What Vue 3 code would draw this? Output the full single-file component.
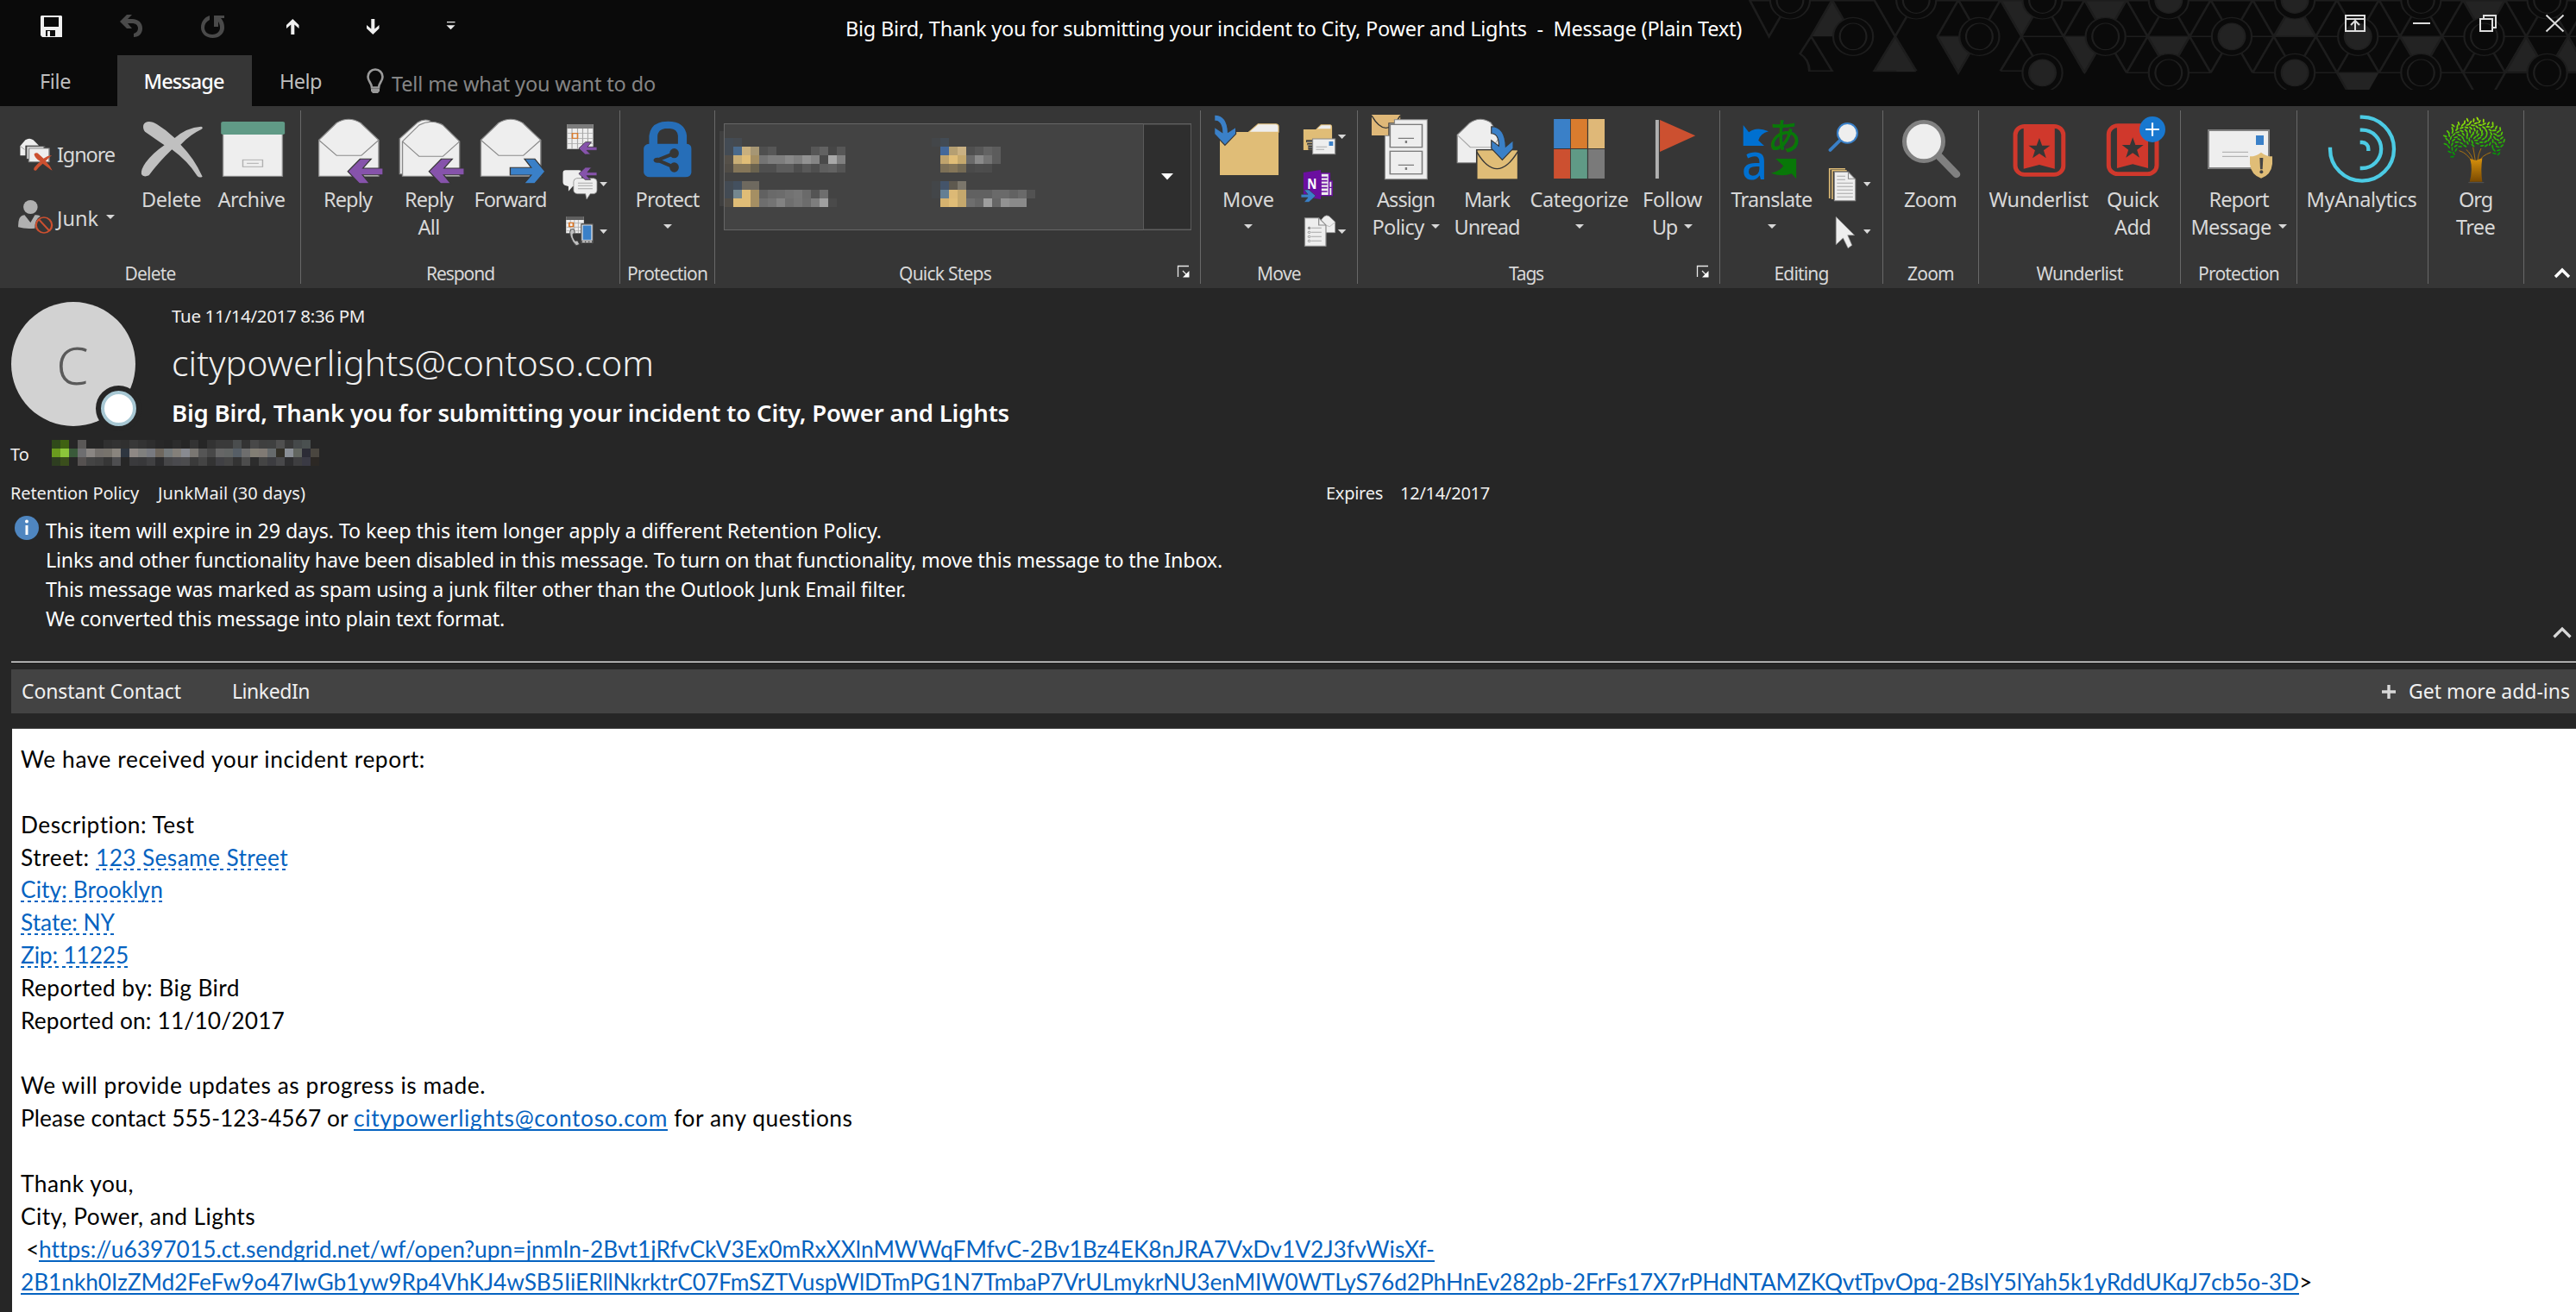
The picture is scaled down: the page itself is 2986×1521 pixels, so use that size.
<script setup>
// Tightens or loosens tracking so a label fills its designed width.
const vFit = {
  mounted(el, { value }) {
    const n = el.textContent.length
    if (n < 2 || !value) return
    const w = el.getBoundingClientRect().width
    el.style.letterSpacing = ((value - w) / n).toFixed(3) + 'px'
  }
}

// Artwork spaces: each ribbon area has its own drawing scale.
const space = (x, sx) => (s) => `<g transform="translate(${x} 120) scale(${sx} .33333)">${s}</g>`
const a3 = space(0, 0.45918)
const a4 = space(640, 0.48469)
const a5 = space(1380, 0.39541)
const a6 = space(1960, 0.35714)
const a7 = space(2480, 0.33333)

const W = '#eeeeee'
const G = '#8a8a8a'
const BG = '#363636'
const env = `<path d="M805 127L850 67Q880 42 910 67L956 127V253H805Z" fill="${W}" stroke="${G}" stroke-width="3"/><path d="M805 127L850 181H912L956 127" fill="none" stroke="${G}" stroke-width="3"/>`
const back = `<path d="M967 225H916L937 193H909L878 236L907 278H933L915 248H967Z" fill="#8653ab" stroke="${BG}" stroke-width="3"/>`
const smallBack = (x, y) => `<path transform="translate(${x} ${y})" d="M46 17H22L32 0H17L0 22L16 43H30L20 29H46Z" fill="#8653ab" stroke="${BG}" stroke-width="2"/>`
const tri = (x, y, w = 24, h = 15) => `<path d="M${x} ${y}h${w}l${-w / 2} ${h}z" fill="#d8d8d8"/>`
const star = 'M0 -36L9 -10H35L14 7L22 34L0 18L-22 34L-14 7L-35 -10H-9Z'

const icons = {
  delete: a3('<path d="M362 75C366 60 382 60 396 72Q420 92 441 120Q470 84 508 80Q515 84 508 90Q480 108 456 143Q490 190 511 254Q504 260 498 252Q474 200 434 160Q400 205 376 250Q362 258 357 246Q355 230 368 205Q386 172 415 145Q384 115 366 98Q360 88 362 75Z" fill="#c0c0c0"/>'),
  archive: a3(`<rect x="563" y="105" width="150" height="148" fill="${W}" stroke="${G}" stroke-width="3"/><rect x="558" y="63" width="161" height="45" rx="5" fill="#609a86"/><rect x="613" y="196" width="50" height="24" fill="none" stroke="#b0b0b0" stroke-width="3"/><path d="M623 208H653" stroke="#b0b0b0" stroke-width="3"/>`),
  reply: a3(env + back),
  replyAll: a3(`<path d="M1009 245V122L1054 66Q1070 52 1085 60V245Z" fill="${W}" stroke="${G}" stroke-width="3"/><path d="M1016 132L1058 75Q1088 52 1118 75L1160 132V253H1016Z" fill="${W}" stroke="${G}" stroke-width="3"/><path d="M1016 132L1058 184H1118L1160 132" fill="none" stroke="${G}" stroke-width="3"/><g transform="translate(205 0)">${back}</g>`),
  forward: a3(`<g transform="translate(409 0)">${env}</g><path d="M1288 223H1341L1324 193H1350L1376 236L1350 278H1323L1341 249H1288Z" fill="#3a80c8" stroke="${BG}" stroke-width="3"/>`),
  ignore: a3(`<path d="M51 148L64 127Q74 117 84 127L97 145V181H51Z" fill="${W}"/><path d="M51 148L62 160" stroke="${G}" stroke-width="2"/><rect x="66" y="148" width="46" height="46" fill="${W}" stroke="${BG}" stroke-width="4"/><rect x="73" y="156" width="51" height="47" fill="${W}" stroke="${G}" stroke-width="3"/><path d="M68 193V150H114" fill="none" stroke="${G}" stroke-width="2"/><path d="M86 176Q92 168 98 176L110 191Q120 181 131 180Q122 190 115 200Q127 215 132 233Q124 226 108 209Q98 220 91 233Q82 234 87 222Q94 210 102 202Q88 190 86 176Z" fill="#cc5030"/>`),
  junk: a3('<ellipse cx="77" cy="360" rx="18" ry="24" fill="#b0b0b0"/><path d="M46 430Q45 388 62 388L77 414L88 388Q98 386 102 392Q88 402 88 434Q66 438 46 430Z" fill="#b0b0b0"/><ellipse cx="111" cy="423" rx="20" ry="27" fill="#363636" stroke="#cc5030" stroke-width="5"/><path d="M98 403L125 443" stroke="#cc5030" stroke-width="5"/>'),
  respondSmall: a3(
    `<rect x="1431" y="72" width="67" height="87" fill="${W}"/><rect x="1431" y="72" width="67" height="15" fill="#7c7c7c"/><path d="M1432 103H1497M1432 121H1497M1432 139H1497M1444 87V158M1458 87V158M1471 87V158M1484 87V158M1432 87V158H1497V87" fill="none" stroke="#a8a8a8" stroke-width="2.5"/><rect x="1445" y="104" width="13" height="17" fill="${W}" stroke="#d87a2c" stroke-width="3.5"/>${smallBack(1461, 134)}` +
    `<path d="M1428 232H1461Q1468 232 1468 242V278Q1468 288 1461 288H1446L1435 305V288Q1421 286 1421 274V242Q1421 232 1428 232Z" fill="${W}"/><path d="M1456 260H1499Q1507 262 1507 272V302Q1507 312 1499 314H1490L1481 333L1478 314H1458Q1448 312 1448 302V272Q1448 262 1456 260Z" fill="${W}" stroke="${G}" stroke-width="2"/><path d="M1459 277H1496M1459 286H1496M1459 296H1496" stroke="#a8a8a8" stroke-width="3"/>${smallBack(1461, 222)}${tri(1514, 273, 19)}` +
    `<rect x="1429" y="393" width="45" height="58" fill="${W}"/><rect x="1429" y="393" width="45" height="12" fill="#5f5f5f"/><path d="M1430 416H1474M1430 430H1474M1440 405V450M1450 405V450M1460 405V450M1430 443H1474" stroke="#a8a8a8" stroke-width="2"/><rect x="1437" y="415" width="10" height="13" fill="${W}" stroke="#d8701c" stroke-width="3.5"/><path d="M1441 438Q1437 446 1440 462Q1445 484 1455 494L1463 490L1458 477L1452 478Q1445 465 1446 455L1451 448L1448 436Z" fill="#c0c0c0" stroke="${BG}" stroke-width="2"/><rect x="1466" y="417" width="32" height="70" rx="3" fill="#565656"/><rect x="1470" y="423" width="24" height="52" fill="#3a80c8" stroke="${W}" stroke-width="2.5"/><path d="M1470 481H1494" stroke="${W}" stroke-width="4" stroke-dasharray="7 2"/>${tri(1514, 438, 19)}`),
  protect: a4(`<path d="M232 140V112Q236 62 277 62Q318 62 322 112V140H322Q333 142 333 156V240Q332 256 318 256H234Q221 255 219 240V156Q220 142 232 140ZM252 140H301V112Q299 88 282 87H270Q254 90 252 112Z" fill="#266eb8" fill-rule="evenodd"/><path d="M294 172L252 197L294 223" fill="none" stroke="${BG}" stroke-width="11"/><ellipse cx="292" cy="173" rx="11" ry="17" fill="${BG}"/><ellipse cx="292" cy="222" rx="11" ry="17" fill="${BG}"/><ellipse cx="252" cy="197" rx="9" ry="9" fill="${BG}"/>`),
  move: a5(`<path d="M170 100L198 71H250Q258 71 258 80V100Z" fill="${W}" stroke="#e0bd77" stroke-width="3"/><path d="M86 99H258V249H86Z" fill="#e0bd77"/><path d="M70 39Q108 40 110 100L133 82V106L101 145L70 106V82L93 100Q92 60 70 60Z" fill="#3a80c8" stroke="${BG}" stroke-width="3"/>`),
  moveSmall: a5(
    `<path d="M331 90H367L382 73H409Q415 73 415 82V162H331Z" fill="#e0bd77"/><path d="M372 88L384 76H411V88Z" fill="${W}"/><path d="M339 131H362M342 141H362M345 150H362M345 157H362" stroke="${BG}" stroke-width="8"/><path d="M341 133H360M343 143H360M346 153H360" stroke="${G}" stroke-width="3"/><rect x="358" y="123" width="66" height="53" fill="${W}" stroke="${G}" stroke-width="3"/><rect x="406" y="132" width="12" height="15" fill="#3a80c8"/><path d="M368 151H400M368 160H392" stroke="#b0b0b0" stroke-width="3"/>${tri(432, 108)}` +
    `<path d="M331 240L382 231V333L331 325Z" fill="#6b0fa0"/><path d="M382 243H408V270H415V320H382Z" fill="${W}" stroke="#6b0fa0" stroke-width="4"/><path d="M382 257H401M382 269H401M382 281H401M382 293H401M382 306H401" stroke="#6b0fa0" stroke-width="5"/><path d="M406 245V320M406 292H415" stroke="#6b0fa0" stroke-width="4"/><text x="342" y="298" font-family="Noto Sans" font-weight="700" font-size="48" textLength="28" lengthAdjust="spacingAndGlyphs" fill="#fff">N</text><path d="M324 316H344L333 300H347L367 321L347 343H333L344 327H324Z" fill="#3a80c8" stroke="${BG}" stroke-width="1.5"/>` +
    `<path d="M381 416L383 405Q398 378 412 398L424 412V449H381Z" fill="${W}" stroke="${G}" stroke-width="2"/><path d="M398 424L408 428L424 413" fill="none" stroke="#a8a8a8" stroke-width="2"/><path d="M335 398H376L397 423V496H335Z" fill="${W}" stroke="${G}" stroke-width="3"/><path d="M376 398V423H397" fill="none" stroke="${G}" stroke-width="3"/><path d="M354 433H384M354 448H384M354 463H384M354 478H384" stroke="#a8a8a8" stroke-width="3"/><g fill="none" stroke="${G}" stroke-width="2.5"><circle cx="348" cy="433" r="3.5" fill="${G}"/><circle cx="348" cy="448" r="3.5"/><circle cx="348" cy="463" r="3.5"/><circle cx="348" cy="478" r="3.5"/></g>${tri(432, 438)}`),
  assign: a5(`<rect x="531" y="39" width="84" height="72" fill="#dfb878"/><path d="M531 42Q573 128 615 42" fill="none" stroke="${BG}" stroke-width="4"/><path d="M580 67H695V263H570V111H580Z" fill="${BG}"/><path d="M598 56H694V263H570V112H584V70H598Z" fill="${W}" stroke="${G}" stroke-width="3"/><rect x="585" y="73" width="94" height="79" fill="${W}" stroke="#7c7c7c" stroke-width="4"/><rect x="585" y="166" width="94" height="79" fill="${W}" stroke="#7c7c7c" stroke-width="4"/><path d="M609 121H655M609 214H655" stroke="#7c7c7c" stroke-width="4"/><path d="M632 129V138M632 222V231" stroke="#7c7c7c" stroke-width="6"/>`),
  unread: a5(`<path d="M782 109L818 68Q848 42 880 66L904 109V206H782Z" fill="${W}" stroke="${G}" stroke-width="3"/><path d="M782 109L820 152H886L904 120" fill="none" stroke="#a8a8a8" stroke-width="3"/><rect x="839" y="161" width="121" height="103" fill="#e0bd77" stroke="${BG}" stroke-width="4"/><path d="M839 168Q898 286 959 168" fill="none" stroke="${BG}" stroke-width="4"/><path d="M882 80Q922 80 924 150L946 128V156L914 196L882 156V128L904 148Q904 104 882 104Z" fill="#3a80c8" stroke="${BG}" stroke-width="3"/>`),
  categorize: a5('<rect x="1065" y="54" width="48" height="102" fill="#3a80c8"/><rect x="1115" y="54" width="48" height="102" fill="#d97c2e"/><rect x="1166" y="54" width="48" height="102" fill="#dfb878"/><rect x="1065" y="159" width="48" height="102" fill="#cc5030"/><rect x="1115" y="159" width="48" height="102" fill="#609a86"/><rect x="1166" y="159" width="48" height="102" fill="#7a7a7a"/>'),
  follow: a5('<rect x="1363" y="57" width="10" height="204" fill="#b0b0b0"/><path d="M1376 57L1480 112L1376 168Z" fill="#cc5030"/>'),
  translate: a6('<path d="M170 75L188 100Q214 78 252 97Q226 104 219 128L238 147H170Z" fill="#0070d0"/><path d="M342 262L327 244Q296 256 260 242Q290 236 300 217L275 192H342Z" fill="#087808"/><text x="165" y="263" font-family="Noto Sans" font-weight="500" font-size="172" textLength="84" lengthAdjust="spacingAndGlyphs" fill="#0070d0">a</text><text x="250" y="162" font-family="Noto Sans CJK JP" font-weight="500" font-size="128" textLength="108" lengthAdjust="spacingAndGlyphs" fill="#087808">あ</text>'),
  editSmall: a6(
    `<path d="M452 162L484 128" stroke="#3a80c8" stroke-width="11" stroke-linecap="round"/><ellipse cx="508" cy="103" rx="32" ry="34" fill="${W}" stroke="#3a80c8" stroke-width="6"/>` +
    `<path d="M450 330V227H501M459 333V233H506" fill="none" stroke="#e0bd77" stroke-width="4.5"/><path d="M466 238H511L534 264V338H466Z" fill="${W}" stroke="${G}" stroke-width="3"/><path d="M511 238V262H534" fill="none" stroke="${G}" stroke-width="3"/><path d="M474 253H501M474 265H501M474 277H526M474 289H526M474 301H526M474 313H526M474 325H526" stroke="#a8a8a8" stroke-width="3"/>${tri(560, 273)}` +
    `<path d="M471 394L531 458H509L523 493L510 503L494 468L471 491Z" fill="${W}" stroke="${G}" stroke-width="2"/>${tri(560, 438)}`),
  zoom: a6(`<path d="M806 184L862 246" stroke="#808080" stroke-width="25" stroke-linecap="round"/><ellipse cx="756" cy="132" rx="63" ry="68" fill="${W}" stroke="#808080" stroke-width="14"/>`),
  wunder: a6(`<rect x="1053" y="79" width="156" height="168" rx="30" fill="none" stroke="#d0382c" stroke-width="14"/><path d="M1080 78H1181V227L1131 213L1080 227Z" fill="#d0382c"/><path transform="translate(1131 156)" d="${star}" fill="${BG}"/>`),
  quick: a6(`<g transform="translate(303 -2)"><rect x="1053" y="79" width="156" height="168" rx="30" fill="none" stroke="#d0382c" stroke-width="14"/><path d="M1080 78H1181V227L1131 213L1080 227Z" fill="#d0382c"/><path transform="translate(1131 156)" d="${star}" fill="${BG}"/></g><ellipse cx="1498" cy="90" rx="42" ry="45" fill="#1878d0"/><path d="M1476 90H1520M1498 67V113" stroke="#fff" stroke-width="6"/>`),
  report: a7(`<rect x="240" y="93" width="210" height="132" fill="${W}" stroke="#808080" stroke-width="6"/><rect x="405" y="111" width="27" height="33" fill="#3a80c8"/><path d="M288 169H378M288 184H378" stroke="#a8a8a8" stroke-width="3"/><path d="M384 184Q406 184 423 170Q440 184 462 184V210Q458 248 423 260Q388 248 384 210Z" fill="#e0bd77"/><path d="M418 189H430L428 229H420Z" fill="#444"/><circle cx="424" cy="238" r="6" fill="#444"/>`),
  analytics: a7('<g fill="none" stroke="#4ccbe4" stroke-width="13"><path d="M767 47H774A111 111 0 1 1 663 158V152"/><path d="M767 92H774A66 66 0 0 1 774 225H767"/><path d="M767 135H774A22 22 0 0 1 796 158V165"/></g>'),
  tree: a7(treeArt())
}

function treeArt() {
  let s = '<defs><linearGradient id="trunk" x1="0" y1="0" x2="0" y2="1"><stop offset="0" stop-color="#d8920c"/><stop offset="1" stop-color="#7a4a02"/></linearGradient></defs>'
  s += '<g fill="none" stroke="#a87010" stroke-width="3"><path d="M1158 205Q1140 172 1112 164M1160 200Q1155 176 1136 160M1168 200Q1164 172 1160 152M1176 198Q1178 176 1188 156M1180 202Q1192 180 1222 170"/></g>'
  s += '<path d="M1150 192L1170 198L1192 190Q1186 232 1192 272H1148Q1160 232 1150 192Z" fill="url(#trunk)"/><path d="M1144 275H1198" stroke="#555" stroke-width="3"/>'
  for (let i = 0; i < 150; i++) {
    const r = Math.sqrt((i + 0.5) / 150)
    const t = i * 2.39996
    const x = 1165 + r * 105 * Math.cos(t)
    const y = 128 + r * (Math.sin(t) > 0 ? 88 : 76) * Math.sin(t)
    const dx = Math.abs(x - 1167)
    if (y > 150 && dx < 48 + (y - 150) * 0.6) continue
    const k = Math.max(0, Math.min(1, (y - 50) / 140))
    const c = `rgb(${Math.round(165 * (1 - k) ** 1.4)},${Math.round(232 - 92 * k)},8)`
    s += `<ellipse cx="${x.toFixed(1)}" cy="${y.toFixed(1)}" rx="7.6" ry="2.9" transform="rotate(${(i * 67) % 180} ${x.toFixed(1)} ${y.toFixed(1)})" fill="${c}"/>`
  }
  return s
}

const L = (t, w, arrow) => ({ t, w, arrow })
const A = { arrowOnly: true }
const groups = [
  { x: 0, e: 349, label: 'Delete', lw: 59, items: [
    { pair: true, x: 18, w: 132, rows: [{ icon: 'ignore', vb: '18 153 45 50', t: 'Ignore', w: 67 }, { icon: 'junk', vb: '18 227 45 50', t: 'Junk', w: 48, arrow: true }] },
    { x: 153, w: 92, icon: 'delete', lines: [L('Delete', 69)] },
    { x: 246, w: 92, icon: 'archive', lines: [L('Archive', 78)] }] },
  { x: 349, e: 719, label: 'Respond', lw: 79, items: [
    { x: 357, w: 93, icon: 'reply', lines: [L('Reply', 56)] },
    { x: 451, w: 93, icon: 'replyAll', lines: [L('Reply', 56), L('All', 25)] },
    { x: 545, w: 94, icon: 'forward', lines: [L('Forward', 84)] },
    { col: true, x: 648, w: 62, icon: 'respondSmall' }] },
  { x: 719, e: 829, label: 'Protection', lw: 93, items: [
    { x: 728, w: 92, icon: 'protect', lines: [L('Protect', 74), A] }] },
  { x: 829, e: 1392, label: 'Quick Steps', lw: 107, launcher: true, items: [{ steps: true, x: 834, w: 547 }] },
  { x: 1392, e: 1574, label: 'Move', lw: 51, items: [
    { x: 1401, w: 93, icon: 'move', lines: [L('Move', 60), A] },
    { col: true, x: 1505, w: 62, icon: 'moveSmall' }] },
  { x: 1574, e: 1994, label: 'Tags', lw: 40, launcher: true, items: [
    { x: 1583, w: 94, icon: 'assign', lines: [L('Assign', 67), L('Policy', 60, true)] },
    { x: 1678, w: 92, icon: 'unread', lines: [L('Mark', 53), L('Unread', 76)] },
    { x: 1771, w: 120, icon: 'categorize', lines: [L('Categorize', 114), A] },
    { x: 1893, w: 92, icon: 'follow', lines: [L('Follow', 69), L('Up', 29, true)] }] },
  { x: 1994, e: 2183, label: 'Editing', lw: 63, items: [
    { x: 2004, w: 100, icon: 'translate', lines: [L('Translate', 94), A] },
    { col: true, x: 2114, w: 62, icon: 'editSmall' }] },
  { x: 2183, e: 2294, label: 'Zoom', lw: 54, items: [{ x: 2192, w: 92, icon: 'zoom', lines: [L('Zoom', 61)] }] },
  { x: 2294, e: 2528, label: 'Wunderlist', lw: 100, items: [
    { x: 2303, w: 121, icon: 'wunder', lines: [L('Wunderlist', 115)] },
    { x: 2426, w: 93, icon: 'quick', lines: [L('Quick', 60), L('Add', 42)] }] },
  { x: 2528, e: 2663, label: 'Protection', lw: 94, items: [{ x: 2535, w: 121, icon: 'report', lines: [L('Report', 69), L('Message', 93, true)] }] },
  { x: 2663, e: 2815, label: '', items: [{ x: 2672, w: 132, icon: 'analytics', lines: [L('MyAnalytics', 128)] }] },
  { x: 2815, e: 2926, label: '', items: [{ x: 2824, w: 92, icon: 'tree', lines: [L('Org', 39), L('Tree', 45)] }] }
]
groups.forEach((g) => {
  let end = g.x
  g.items.forEach((it) => { it.gap = it.x - end; end = it.x + it.w })
})

// Pixelated swatches: [x, y, colours...], cells are 10px squares.
const stepCells = [
  [840, 160, '#434b54', '#454a50'],
  [840, 170, '#434b54', '#4a6a8c', '#c9b07e', '#a69674', '#4f4f4f', '#575757', '', '', '', '', '#575757', '#626262', '#464646', '#575757'],
  [840, 180, '#555049', '#c9ae76', '#e0bd77', '#a58f63', '#747474', '#7e7e7e', '#7e7e7e', '#898989', '#808080', '#929292', '#858585', '#4a4a4a', '#a8a8a8', '#808080'],
  [840, 190, '#504c46', '#857659', '#857659', '#6b634f', '#4f4f4f', '#4f4f4f', '#5c5c5c', '#5c5c5c', '#4d4d4d', '#595959', '#4f4f4f', '#5e5e5e', '#626262', '#555555'],
  [840, 210, '#434b54', '#43505f', '#6e695f', '#6e695f'],
  [840, 220, '#434b54', '#74878f', '#e0bd77', '#a58f63', '#616161', '#6a6a6a', '#6c6c6c', '#727272', '#767676', '#6a6a6a', '#545454', '#6e6e6e'],
  [840, 230, '#504c46', '#e0bd77', '#e0bd77', '#a58f63', '#6e6e6e', '#747474', '#828282', '#6e6e6e', '#757575', '#6c6c6c', '#7e7e7e', '#a0a0a0', '#4a4a4a'],
  [1080, 160, '#434649', '#434b54'],
  [1080, 170, '', '#44689a', '#b59f72', '#cab183', '#4f4f4f', '#575757', '#636363', '#5c5c5c'],
  [1080, 180, '', '#bfa36d', '#e0bd77', '#c5a86d', '#6a6a6a', '#8a8a8a', '#747474', '#5c5c5c'],
  [1080, 190, '', '#7d7057', '#857659', '#746a54', '#4a4a4a', '#4d4d4d', '#4c4c4c'],
  [1080, 210, '#434649', '#44546a', '#5e594f', '#7b766b'],
  [1080, 220, '#434649', '#647f93', '#dcb976', '#c5a86d', '#616161', '#616161', '#616161', '#6a6a6a', '#6a6a6a', '#626262', '#6a6a6a', '#525252'],
  [1080, 230, '', '#d5b26f', '#e0bd77', '#c5a86d', '#6e6e6e', '#666666', '#9e9e9e', '#666666', '#929292', '#8a8a8a', '#8a8a8a']
]
const toCells = [
  '2f4a1a 3f6212 262626 5a5857 262626 262626 303030 333333 303030 383838 333333 2e2e2e 282828 262626 2c2c2c 262626 333333 262626 333333 3a3a3a 3a3a3a 4a4d4e 333333 484848 3f3f3f 3f4040 505050 383838 45494a 4a5050 262626',
  '6a9b1e 8cc63a 3a5a3a 6e6e70 8a8683 75716d 77736c 8a857e 2e3640 8e8884 80807e 787a80 6e675e 757a7c 84807a 888a90 7a7772 555555 484848 666666 626564 565e66 6e6e6e 827e74 807a74 666a6c 333028 8a8f96 626660 2c2c36 4a463f',
  '2e3e20 3a4e1c 262626 555150 444444 404040 363636 4e4e50 262626 3a3a3c 38383a 404042 2c2c2e 464648 4a4a4e 4c4c4e 3a3a3a 444444 333333 404044 444444 333333 4c4c4c 2c2c2c 444444 3c3c40 48484a 2e2e30 3e3e40 3a3a44 2c2824'
].map((r, j) => [0, j * 10, ...r.split(' ').map((c) => '#' + c)])
const flat = (rows) => rows.flatMap(([x, y, ...cs]) => cs.map((c, i) => ({ x: x + i * 10, y, c })).filter((o) => o.c))
const stepRects = flat(stepCells)
const toRects = flat(toCells)

// Title bar ornament: a triangular lattice with a ring on every third node.
const rings = []
for (let x = 148; x < 1600; x += 228) rings.push([x, 0, [832, 1060].includes(x)])
for (let x = 262; x < 1600; x += 228) rings.push([x, 127, [946, 1174].includes(x)])
for (let x = 604; x < 1600; x += 228) rings.push([x, 253, [604, 1060].includes(x)])
const solids = [[224, 0, 186, 127, 262, 127], [338, 127, 300, 250, 376, 250], [414, 127, 490, 127, 452, 258], [528, 0, 604, 0, 566, 127], [680, 0, 756, 0, 718, 127], [642, 127, 718, 127, 680, 258], [794, 127, 870, 127, 832, 253], [1060, 0, 1022, 127, 1098, 127], [1364, 0, 1440, 0, 1402, 127], [1250, 127, 1326, 127, 1288, 253], [1136, 253, 1212, 253, 1174, 380], [1476, 127, 1438, 250, 1514, 250], [1552, 127, 1514, 250, 1590, 250]]
let lattice = 'M75 2H300M410 2H1580M75 0L110 127L148 0M224 0L186 127M224 0L262 127M300 0L338 127M376 0L338 127M186 127L166 187Q182 205 183 247H224L186 127M338 127L300 247H340M338 127L376 247M414 127H490M566 127H718M756 127H1580M528 247H572M756 253H908M984 253H1580M566 127L604 253M566 127L528 247M414 127L452 253L490 127'
for (let x = 452; x < 1600; x += 76) lattice += `M${x} 0L${x - 38} 127M${x} 0L${x + 38} 127`
for (let x = 642; x < 1600; x += 76) lattice += `M${x} 127L${x + 38} 253M${x + 76} 127L${x + 38} 253`
lattice += 'M1364 253L1402 380L1440 253M1136 253L1174 380'

const notices = [
  ['This item will expire in 29 days. To keep this item longer apply a different Retention Policy.', 969],
  ['Links and other functionality have been disabled in this message. To turn on that functionality, move this message to the Inbox.', 1364],
  ['This message was marked as spam using a junk filter other than the Outlook Junk Email filter.', 997],
  ['We converted this message into plain text format.', 532]
]
</script>

<template>
  <div class="window">
    <header class="top">
      <svg class="ornament" width="1006" height="104" viewBox="0 0 1568 312" preserveAspectRatio="none">
        <polygon v-for="(p, i) in solids" :key="'s' + i" :points="p.join(' ')" fill="#232323" />
        <path :d="lattice" fill="none" stroke="#1d1d1d" stroke-width="4.500" />
        <g v-for="(r, i) in rings" :key="'r' + i">
          <ellipse :cx="r[0]" :cy="r[1]" rx="36" ry="66" fill="#0a0a0a" stroke="#1d1d1d" stroke-width="3.500" />
          <ellipse :cx="r[0]" :cy="r[1]" rx="24" ry="46" :fill="r[2] ? '#232323' : '#0a0a0a'" stroke="#1f1f1f" stroke-width="3.500" />
        </g>
      </svg>
      <div class="titlebar">
        <svg width="560" height="64" viewBox="0 0 560 64">
          <path d="M48 18H71L72 19V43H49L47 41V19ZM51 20V31H68V20ZM53 35V42H55V36H58V42H64V35Z" fill="#f0f0f0" fill-rule="evenodd" />
          <path d="M139 25L147 17H153L148 22H153C161 22 165 27 165 33C165 39 161 43 155 43V39C158 38 160 36 160 33C160 29 157 27 153 27H148L153 33H147Z" fill="#4a4a4a" />
          <path d="M243 18V23C239 25 237 28 237 32C237 37 241 40 246 40C252 40 255 36 255 32C255 29 254 27 253 25V31H248V18H260V21H256C259 24 260 28 260 32C260 39 254 44 246.500 44C239 44 233 39 233 32C233 25 237 20 243 18Z" fill="#4a4a4a" />
          <path d="M339.300 22L346.500 29V33L341.300 28.500V40H337.300V28.500L332 33V29Z" fill="#f0f0f0" />
          <path d="M432.300 40L439.500 33V29L434.300 33.500V22H430.300V33.500L425 29V33Z" fill="#f0f0f0" />
          <path d="M518 25H527.500V26.200H518ZM517.500 29.200H527.500L522.500 34.200Z" fill="#e8e8e8" />
        </svg>
        <div class="title"><span v-fit="1039" class="t">Big Bird, Thank you for submitting your incident to City, Power and Lights&nbsp; -&nbsp; Message (Plain Text)</span></div>
        <svg class="winbtns" width="286" height="64" viewBox="2700 0 286 64" fill="none" stroke="#dcdcdc" stroke-width="2">
          <path d="M2719 18H2741V36H2719ZM2719 22H2741M2730 35V24M2725 29L2730 24L2735 29" />
          <path d="M2797 27H2817" />
          <path d="M2875 22H2889V36H2875ZM2879 22V18H2893V32H2889" />
          <path d="M2951.500 17.500L2971.500 36.500M2971.500 17.500L2951.500 36.500" />
        </svg>
      </div>
      <nav class="tabs">
        <a class="tab file"><span v-fit="36" class="t">File</span></a>
        <a class="tab active"><span v-fit="93" class="t">Message</span></a>
        <a class="tab help"><span v-fit="49" class="t">Help</span></a>
        <svg width="24" height="59" viewBox="423 64 24 59">
          <path d="M431 101.500C431 96 426.500 94.500 426.500 89A8.500 8.500 0 0 1 443.500 89C443.500 94.500 439 96 439 101.500Z" fill="none" stroke="#9a9a9a" stroke-width="2.600" />
          <path d="M430 103H440V105.500L438 108H432L430 105.500Z" fill="#9a9a9a" />
        </svg>
        <a class="tab tell"><span v-fit="306" class="t">Tell me what you want to do</span></a>
      </nav>
    </header>

    <section class="ribbon">
      <div v-for="(g, gi) in groups" :key="gi" class="group" :style="{ width: g.e - g.x + 'px' }">
        <div class="items">
          <template v-for="(it, i) in g.items" :key="i">
            <div v-if="it.pair" class="pair" :style="{ marginLeft: it.gap + 'px', width: it.w + 'px' }">
              <div v-for="r in it.rows" :key="r.t" class="row">
                <svg width="45" height="50" :viewBox="r.vb" v-html="icons[r.icon]"></svg>
                <span v-fit="r.w" class="t">{{ r.t }}</span>
                <i v-if="r.arrow" class="arrow"></i>
              </div>
            </div>
            <svg v-else-if="it.col" :style="{ marginLeft: it.gap + 'px' }" :width="it.w" height="170" :viewBox="`${it.x} 130 ${it.w} 170`" v-html="icons[it.icon]"></svg>
            <svg v-else-if="it.steps" :style="{ marginLeft: it.gap + 'px' }" :width="it.w" height="170" :viewBox="`${it.x} 130 ${it.w} 170`">
              <rect x="839.500" y="143.500" width="541" height="123" fill="#434343" stroke="#666" />
              <rect x="1325.500" y="144" width="55" height="122" fill="#2e2e2e" stroke="#5a5a5a" />
              <rect x="834" y="152" width="5" height="87" fill="#404040" />
              <rect v-for="(c, k) in stepRects" :key="k" :x="c.x" :y="c.y" width="10" height="10" :fill="c.c" />
              <path d="M1346 201H1360L1353 208.500Z" fill="#fff" />
            </svg>
            <div v-else class="big" :style="{ marginLeft: it.gap + 'px', width: it.w + 'px' }">
              <svg :width="it.w" height="85" :viewBox="`${it.x} 130 ${it.w} 85`" v-html="icons[it.icon]"></svg>
              <div v-for="(l, k) in it.lines" :key="k" class="line">
                <i v-if="l.arrowOnly" class="arrow"></i>
                <template v-else>
                  <span v-fit="l.w" class="t">{{ l.t }}</span>
                  <i v-if="l.arrow" class="arrow"></i>
                </template>
              </div>
            </div>
          </template>
        </div>
        <div class="caption">
          <div class="name"><span v-if="g.label" v-fit="g.lw" class="t">{{ g.label }}</span></div>
          <svg v-if="g.launcher" width="29" height="28" viewBox="0 0 29 28">
            <path d="M2.500 20V7.500H15M8 13L14 19" fill="none" stroke="#e8e8e8" stroke-width="1.300" />
            <path d="M15.500 13V20.500H8Z" fill="#fff" />
          </svg>
        </div>
      </div>
      <svg class="collapse" width="20" height="13" viewBox="0 0 20 13"><path d="M2 11L10 3L18 11" fill="none" stroke="#fff" stroke-width="3.400" /></svg>
    </section>

    <section class="head">
      <div class="sender">
        <div class="avatar">
          <span>C</span>
          <i class="presence"></i>
        </div>
        <div class="who">
          <div class="date"><span v-fit="224" class="t">Tue 11/14/2017 8:36 PM</span></div>
          <div class="from"><span v-fit="559" class="t">citypowerlights@contoso.com</span></div>
          <div class="subject"><span v-fit="971" class="t">Big Bird, Thank you for submitting your incident to City, Power and Lights</span></div>
        </div>
      </div>
      <div class="meta to">
        <span v-fit="22" class="t">To</span>
        <svg width="310" height="30" viewBox="0 0 310 30" shape-rendering="crispEdges"><rect v-for="(c, k) in toRects" :key="k" :x="c.x" :y="c.y" width="10" height="10" :fill="c.c" /></svg>
      </div>
      <div class="meta policy">
        <div class="col"><span v-fit="149" class="t">Retention Policy</span></div>
        <div class="col2"><span v-fit="171" class="t">JunkMail (30 days)</span></div>
        <div class="col3"><span v-fit="66" class="t">Expires</span></div>
        <div><span v-fit="104" class="t">12/14/2017</span></div>
      </div>
      <div class="info">
        <svg width="28" height="28" viewBox="0 0 28 28"><circle cx="14" cy="14" r="14" fill="#4f86c0" /><path d="M14 11V22" stroke="#fff" stroke-width="3" /><circle cx="14" cy="6.500" r="2" fill="#fff" /></svg>
        <div class="notices">
          <div v-for="n in notices" :key="n[1]"><span v-fit="n[1]" class="t">{{ n[0] }}</span></div>
        </div>
        <svg class="fold" width="24" height="18" viewBox="0 0 24 18"><path d="M2.500 14.500L12 5L21.500 14.500" fill="none" stroke="#d8d8d8" stroke-width="3.200" /></svg>
      </div>
      <hr class="rule" />
      <div class="addins">
        <span class="cc"><span v-fit="185" class="t">Constant Contact</span></span>
        <span class="li"><span v-fit="90" class="t">LinkedIn</span></span>
        <svg width="16" height="16" viewBox="0 0 16 16"><path d="M0 8H16M8 0V16" stroke="#d8d8d8" stroke-width="3.400" /></svg>
        <span v-fit="187" class="t">Get more add-ins</span>
      </div>
    </section>

    <main class="body">
      <p><span v-fit="469" class="t">We have received your incident report:</span></p>
      <p></p>
      <p><span v-fit="202" class="t">Description: Test</span></p>
      <p><span v-fit="87" class="t">Street: </span><span v-fit="223" class="t"><a class="geo">123 Sesame Street</a></span></p>
      <p><span v-fit="165" class="t"><a class="geo">City: Brooklyn</a></span></p>
      <p><span v-fit="109" class="t"><a class="geo">State: NY</a></span></p>
      <p><span v-fit="125" class="t"><a class="geo">Zip: 11225</a></span></p>
      <p><span v-fit="254" class="t">Reported by: Big Bird</span></p>
      <p><span v-fit="306" class="t">Reported on: 11/10/2017</span></p>
      <p></p>
      <p><span v-fit="539" class="t">We will provide updates as progress is made.</span></p>
      <p><span v-fit="386" class="t">Please contact 555-123-4567 or </span><span v-fit="364" class="t"><a class="url">citypowerlights@contoso.com</a></span><span v-fit="215" class="t"> for any questions</span></p>
      <p></p>
      <p><span v-fit="131" class="t">Thank you,</span></p>
      <p><span v-fit="272" class="t">City, Power, and Lights</span></p>
      <p><span v-fit="21" class="t"> &lt;</span><span v-fit="1617" class="t"><a class="url">https://u6397015.ct.sendgrid.net/wf/open?upn=jnmIn-2Bvt1jRfvCkV3Ex0mRxXXlnMWWqFMfvC-2Bv1Bz4EK8nJRA7VxDv1V2J3fvWisXf-</a></span></p>
      <p><span v-fit="2641" class="t"><a class="url">2B1nkh0IzZMd2FeFw9o47IwGb1yw9Rp4VhKJ4wSB5IiERllNkrktrC07FmSZTVuspWlDTmPG1N7TmbaP7VrULmykrNU3enMIW0WTLyS76d2PhHnEv282pb-2FrFs17X7rPHdNTAMZKQvtTpvOpq-2BsIY5lYah5k1yRddUKqJ7cb5o-3D</a></span><span class="t">&gt;</span></p>
    </main>
  </div>
</template>

<style>
body { margin: 0; background: #262626; }
</style>

<style scoped>
.window { width: 2986px; height: 1521px; overflow: hidden; display: flex; flex-direction: column; background: #262626; font-family: "Noto Sans", "Open Sans", sans-serif; font-size: 23.5px; color: #f0f0f0; }
.t { display: inline-block; white-space: pre; }
svg { display: block; flex: none; }
.big svg { overflow: visible; }

.top { position: relative; height: 123px; background: #0a0a0a; flex: none; }
.ornament { position: absolute; right: 0; top: 0; }
.titlebar { position: relative; height: 64px; display: flex; }
.title { padding: 17px 0 0 420px; line-height: 32px; color: #fff; }
.winbtns { margin-left: auto; }
.tabs { position: relative; display: flex; height: 59px; line-height: 61px; color: #bdbdbd; }
.tab { display: block; box-sizing: border-box; height: 59px; }
.file { width: 136px; padding-left: 46px; }
.active { width: 156px; padding-right: 2px; text-align: center; background: #363636; color: #fff; font-weight: 500; }
.help { width: 131px; padding-left: 32px; }
.tell { padding: 3px 0 0 7px; color: #858585; }

.ribbon { display: flex; height: 211px; background: #363636; color: #d8d8d8; flex: none; }
.group { box-sizing: border-box; height: 206px; padding-top: 7px; display: flex; flex-direction: column; background: linear-gradient(#686868, #686868) right 5px / 1px 201px no-repeat; background-position: right 5px; }
.items { display: flex; height: 172px; }
.big { display: flex; flex-direction: column; }
.line { display: flex; justify-content: center; align-items: center; height: 32px; line-height: 32px; gap: 8px; padding-right: 1px; }
.arrow { width: 0; height: 0; border: 5px solid transparent; border-bottom: 0; border-top-color: #d8d8d8; }
.line .arrow { margin-top: -1px; }
.pair { padding-top: 23px; }
.row { display: flex; align-items: center; height: 50px; margin-bottom: 24px; gap: 9px; }
.row .t { margin-left: -6px; padding-top: 1px; }
.row .arrow { margin-top: -2px; }
.caption { display: flex; height: 28px; line-height: 28px; font-size: 21px; }
.name { flex: 1; text-align: center; padding: 2px 1px 0 0; }
.collapse { margin: 187px 6px 0 auto; }

.head { height: 511px; flex: none; }
.sender { display: flex; height: 177px; }
.avatar { position: relative; width: 144px; height: 144px; margin: 16px 0 0 13px; border-radius: 50%; background: #d2d2d2; color: #5a5a5a; text-align: center; font-size: 60px; line-height: 146px; font-weight: 300; flex: none; }
.avatar span { margin-right: 2px; }
.presence { position: absolute; right: -5px; bottom: -5px; width: 33px; height: 33px; border-radius: 50%; background: #fff; border: 4px solid #a8c8d4; box-shadow: 0 0 0 6px #262626; transform: translate(-4px, -5px); }
.who { padding: 17px 0 0 42px; }
.date { font-size: 20.5px; line-height: 30px; }
.from { margin-top: 9px; font-size: 41px; line-height: 60px; font-weight: 300; }
.subject { margin-top: 9px; font-size: 27.5px; line-height: 40px; font-weight: 600; color: #fff; }
.meta { display: flex; height: 30px; line-height: 32px; font-size: 20px; padding-left: 12px; }
.to svg { margin: -1px 0 0 26px; }
.policy { margin-top: 15px; }
.col { width: 171px; }
.col2 { width: 1354px; }
.col3 { width: 86px; }
.info { display: flex; margin-top: 12px; padding-left: 17px; height: 169px; color: #fff; font-size: 23.3px; line-height: 34px; }
.notices { padding-left: 8px; flex: 1; }
.fold { margin: 126px 4px 0 0; }
.rule { margin: 0 0 0 13px; border: 0; height: 1px; background: #fff; box-shadow: 0 -1px 0 #555; }
.addins { display: flex; align-items: center; box-sizing: border-box; height: 51px; margin: 8px 0 0 13px; padding: 0 7px 0 12px; background: #434343; font-size: 23px; line-height: 51px; }
.cc { width: 244px; }
.li { flex: 1; }
.addins svg { margin-right: 15px; }

.body { flex: 1; margin-left: 14px; padding: 17px 0 0 10px; background: #fff; color: #000; font-family: Lato, "Noto Sans", sans-serif; font-size: 26.3px; box-shadow: 0 -1px 0 #4a4a4a; }
.body p { margin: 0; height: 37.85px; line-height: 37.85px; white-space: nowrap; }
.body a { color: #0563c1; }
.url { text-decoration: underline 2px; text-underline-offset: 3px; text-decoration-skip-ink: none; }
.geo { background: repeating-linear-gradient(90deg, #0563c1 0 4px, transparent 4px 8px) 0 calc(100% - 1px) / 100% 2px no-repeat; }
</style>
